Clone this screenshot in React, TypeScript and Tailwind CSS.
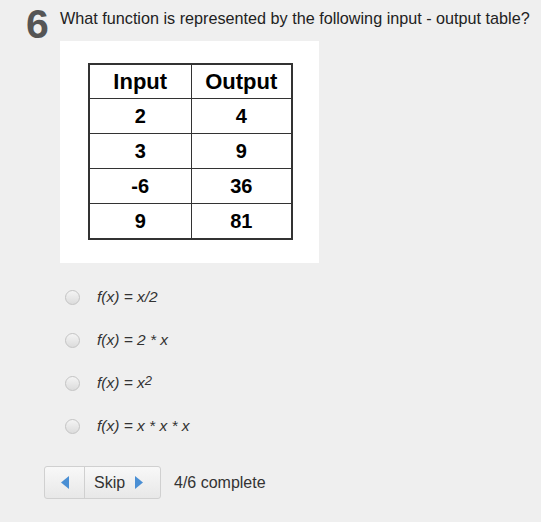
export default function App() {
  const rows = [
    ["2", "4"],
    ["3", "9"],
    ["-6", "36"],
    ["9", "81"],
  ];
  const options = [
    <>f(x) = x/2</>,
    <>f(x) = 2 * x</>,
    <>
      f(x) = x<span className="text-[13px] relative -top-[3px]">2</span>
    </>,
    <>f(x) = x * x * x</>,
  ];

  return (
    <div className="w-[541px] h-[522px] bg-[#efefef] font-['Liberation_Sans',Arial,sans-serif] text-[#333]">
      <div className="flex items-start pt-[4px] pl-[26px]">
        <span className="text-[41px] leading-[40px] font-bold text-[#555] w-[34px]">6</span>
        <span className="text-[16.2px] leading-[18px] mt-[5px] text-[#222]">
          What function is represented by the following input - output table?
        </span>
      </div>

      <div className="ml-[60px] mt-[-3px] w-[259px] h-[222px] bg-white pt-[22px] pl-[28px]">
        <table className="border-collapse border-2 border-[#333] text-black font-bold">
          <thead>
            <tr className="h-[34px]">
              <th className="w-[102px] border border-[#333] text-[22px] font-bold">Input</th>
              <th className="w-[101px] border border-[#333] text-[22px] font-bold">Output</th>
            </tr>
          </thead>
          <tbody>
            {rows.map(([a, b]) => (
              <tr key={a} className="h-[35px]">
                <td className="border border-[#333] text-center text-[20px]">{a}</td>
                <td className="border border-[#333] text-center text-[20px]">{b}</td>
              </tr>
            ))}
          </tbody>
        </table>
      </div>

      <div className="mt-[26px] pl-[65px] flex flex-col gap-[27px]">
        {options.map((o, i) => (
          <label key={i} className="flex items-center h-[16px]">
            <span className="w-[15px] h-[15px] rounded-full border border-[#c4c4c4] bg-gradient-to-b from-[#f4f4f4] to-[#dcdcdc]" />
            <span className="ml-[17px] text-[15.5px] italic text-[#333]">{o}</span>
          </label>
        ))}
      </div>

      <div className="mt-[32px] ml-[44px] flex items-center">
        <div className="flex h-[33px] border border-[#d0d0d0] rounded-[3px] bg-gradient-to-b from-[#f8f8f8] to-[#e8e8e8]">
          <button className="w-[40px] flex items-center justify-center border-r border-[#d0d0d0]">
            <svg width="8" height="13" viewBox="0 0 8 13">
              <path d="M8 0 L0 6.5 L8 13 Z" fill="#4a8fd4" />
            </svg>
          </button>
          <button className="w-[75px] flex items-center pl-[9px] gap-[10px] text-[16px] text-[#333]">
            Skip
            <svg width="8" height="13" viewBox="0 0 8 13">
              <path d="M0 0 L8 6.5 L0 13 Z" fill="#4a8fd4" />
            </svg>
          </button>
        </div>
        <span className="ml-[13px] text-[16px] text-[#333]">4/6 complete</span>
      </div>
    </div>
  );
}
